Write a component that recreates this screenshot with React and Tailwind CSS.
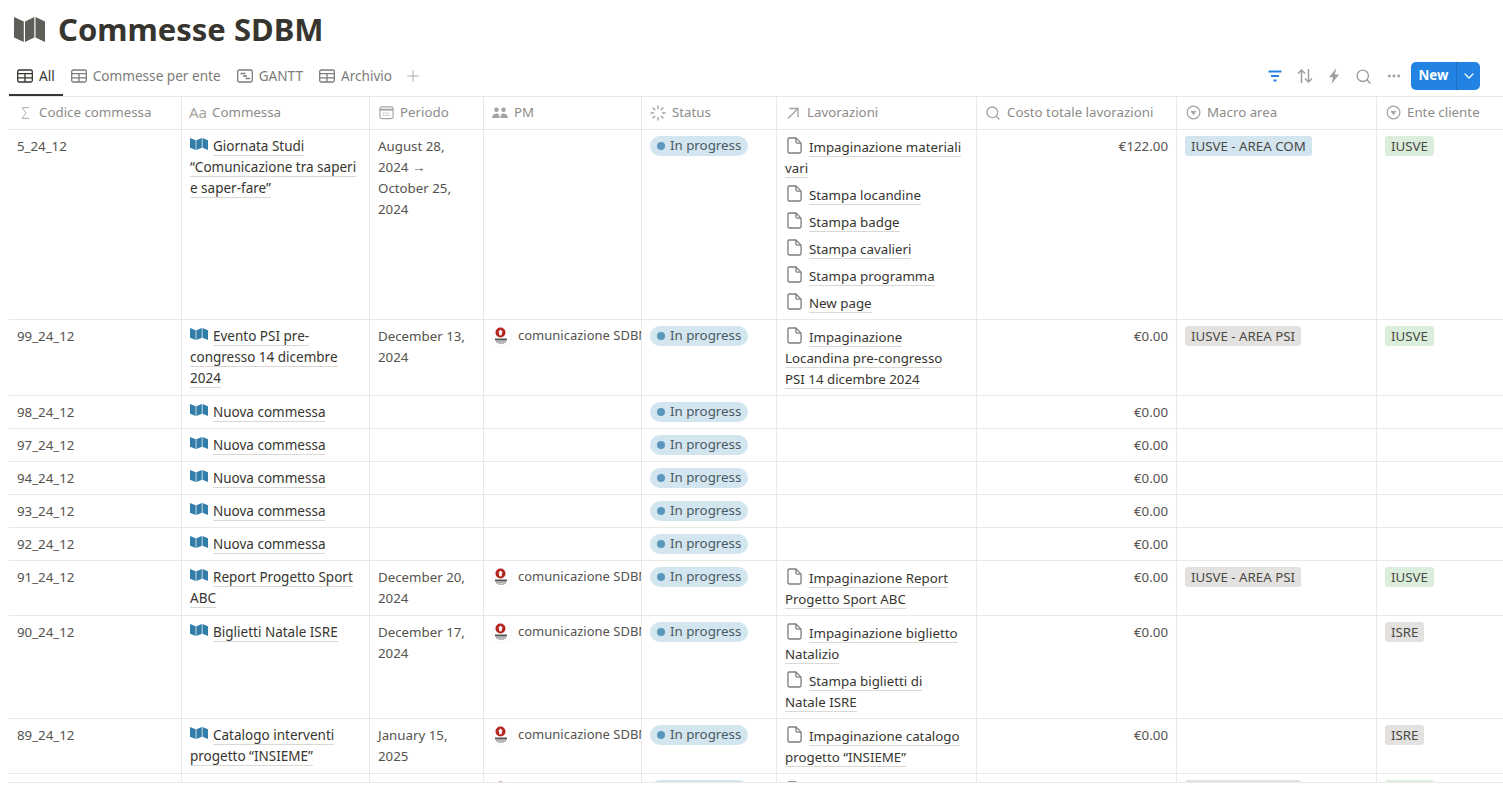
import { Plus, Search, MoreHorizontal, ChevronDown } from 'lucide-react';

const WIDTHS = ['w-[173px]', 'w-[188px]', 'w-[114px]', 'w-[158px]', 'w-[135px]', 'w-[200px]', 'w-[200px]', 'w-[200px]', 'w-[126px]'];

const COM = 'comunicazione SDBM';

const rows = [
  {
    h: 'h-[190px]', code: '5_24_12', name: ['Giornata Studi', '“Comunicazione tra saperi', 'e saper-fare”'],
    period: ['August 28,', '2024 →', 'October 25,', '2024'],
    jobs: [['Impaginazione materiali', 'vari'], ['Stampa locandine'], ['Stampa badge'], ['Stampa cavalieri'], ['Stampa programma'], ['New page']],
    cost: '€122.00', area: ['IUSVE - AREA COM', 'bg-[#d3e5ef]'], ente: ['IUSVE', 'bg-[#dbeddb]'],
  },
  {
    h: 'h-[76px]', code: '99_24_12', name: ['Evento PSI pre-', 'congresso 14 dicembre', '2024'],
    period: ['December 13,', '2024'], pm: true,
    jobs: [['Impaginazione', 'Locandina pre-congresso', 'PSI 14 dicembre 2024']],
    cost: '€0.00', area: ['IUSVE - AREA PSI', 'bg-[#e3e2e0]'], ente: ['IUSVE', 'bg-[#dbeddb]'],
  },
  { h: 'h-[33px]', code: '98_24_12', name: ['Nuova commessa'], cost: '€0.00' },
  { h: 'h-[33px]', code: '97_24_12', name: ['Nuova commessa'], cost: '€0.00' },
  { h: 'h-[33px]', code: '94_24_12', name: ['Nuova commessa'], cost: '€0.00' },
  { h: 'h-[33px]', code: '93_24_12', name: ['Nuova commessa'], cost: '€0.00' },
  { h: 'h-[33px]', code: '92_24_12', name: ['Nuova commessa'], cost: '€0.00' },
  {
    h: 'h-[55px]', code: '91_24_12', name: ['Report Progetto Sport', 'ABC'],
    period: ['December 20,', '2024'], pm: true,
    jobs: [['Impaginazione Report', 'Progetto Sport ABC']],
    cost: '€0.00', area: ['IUSVE - AREA PSI', 'bg-[#e3e2e0]'], ente: ['IUSVE', 'bg-[#dbeddb]'],
  },
  {
    h: 'h-[103px]', code: '90_24_12', name: ['Biglietti Natale ISRE'],
    period: ['December 17,', '2024'], pm: true,
    jobs: [['Impaginazione biglietto', 'Natalizio'], ['Stampa biglietti di', 'Natale ISRE']],
    cost: '€0.00', ente: ['ISRE', 'bg-[#e3e2e0]'],
  },
  {
    h: 'h-[55px]', code: '89_24_12', name: ['Catalogo interventi', 'progetto “INSIEME”'],
    period: ['January 15,', '2025'], pm: true,
    jobs: [['Impaginazione catalogo', 'progetto “INSIEME”']],
    cost: '€0.00', ente: ['ISRE', 'bg-[#e3e2e0]'],
  },
  {
    h: 'h-[33px]', code: '88_24_12', name: ['Nuova commessa'],
    period: ['January 15,'], pm: true,
    jobs: [['Stampa']],
    cost: '€0.00', area: ['IUSVE - AREA PSI', 'bg-[#e3e2e0]'], ente: ['IUSVE', 'bg-[#dbeddb]'],
  },
];

function MapIcon({ className }) {
  return (
    <svg viewBox="0 0 31 25" className={className} fill="currentColor" preserveAspectRatio="none">
      <path d="M0 0 9.800 4.500V25L0 20.500z" />
      <path d="M11 4.500 20.300 0V20.500L11 25z" />
      <path d="M21.500 0 31 4.500V25L21.500 20.500z" />
    </svg>
  );
}

function PageIcon() {
  return (
    <svg viewBox="0 0 16 18" className="inline-block w-[15px] h-[17px] mr-[7px] ml-[2px] align-[-2px] text-[#7f7e7a]" fill="none" stroke="currentColor" strokeWidth="1.400">
      <path d="M2.500 1h7L15 6.500V15.500a1.500 1.500 0 0 1-1.500 1.500h-11A1.500 1.500 0 0 1 1 15.500V2.500A1.500 1.500 0 0 1 2.500 1z" />
      <path d="M9.500 1v4a1.500 1.500 0 0 0 1.500 1.500H15" />
    </svg>
  );
}

function TableIcon({ className }) {
  return (
    <svg viewBox="0 0 16 14" className={className} fill="none" stroke="currentColor" strokeWidth="1.300">
      <rect x="0.700" y="1" width="14.600" height="12" rx="1.500" />
      <path d="M0.700 4.700h14.600M0.700 8.900h14.600M8 4.700V13" />
    </svg>
  );
}

function Avatar() {
  return (
    <svg viewBox="0 0 20 20" className="w-5 h-5 mt-[2px] shrink-0">
      <circle cx="10" cy="10" r="9.700" fill="#fff" stroke="#efefee" strokeWidth="0.600" />
      <circle cx="8.500" cy="5.500" r="5" fill="#b3261e" />
      <path d="M8.500 2.500 6 5.300h1.200V8.200h2.600V5.300H11z" fill="#fff" />
      <rect x="3" y="11.500" width="12" height="2" fill="#555" />
      <rect x="4" y="14.300" width="10" height="1.200" fill="#888" />
      <rect x="6" y="16" width="6" height="1" fill="#bbb" />
    </svg>
  );
}

function HeaderIcon({ children }) {
  return <span className="w-4 h-4 mr-[6px] flex items-center justify-center text-[#a5a4a0] shrink-0">{children}</span>;
}

function SelectIcon() {
  return (
    <svg viewBox="0 0 16 16" className="w-[15px] h-[15px]" fill="none" stroke="currentColor" strokeWidth="1.300">
      <circle cx="8" cy="8" r="6.800" />
      <path d="M4.800 6.300h6.400L8 10.800z" fill="currentColor" stroke="none" />
    </svg>
  );
}

function GanttIcon({ className }) {
  return (
    <svg viewBox="0 0 16 14" className={className} fill="none" stroke="currentColor" strokeWidth="1.300">
      <rect x="0.700" y="1" width="14.600" height="12" rx="1.500" />
      <path d="M3.500 4.500h5M6 7h4M8.500 9.500h4.500" />
    </svg>
  );
}

function HeaderCell({ width, icon, label }) {
  return (
    <div className={`${width} shrink-0 flex items-center pl-2 pb-[1px] border-r border-[#e9e9e7] last:border-r-0 whitespace-nowrap overflow-hidden`}>
      <HeaderIcon>{icon}</HeaderIcon>
      <span>{label}</span>
    </div>
  );
}

function Tab({ icon, label, active }) {
  return (
    <div className={`flex items-center gap-[6px] h-[36px] px-2 pb-[2px] border-b-2 text-[13.6px] ${active ? 'text-[#37352f] border-[#37352f]' : 'text-[#7d7c78] border-transparent'}`}>
      {icon}
      <span>{label}</span>
    </div>
  );
}

function Tag({ tag }) {
  return <span className={`block w-fit h-5 leading-5 px-[6px] rounded-[3px] text-[#4a4945] ${tag[1]}`}>{tag[0]}</span>;
}

function Row({ row }) {
  return (
    <div className={`flex ${row.h} border-b border-[#e9e9e7] overflow-hidden text-[#37352f]`}>
      <div className={`${WIDTHS[0]} shrink-0 pl-2 pt-[6px] border-r border-[#e9e9e7] leading-[21px] text-[#55534e]`}>{row.code}</div>
      <div className={`${WIDTHS[1]} shrink-0 pl-2 pt-[6px] border-r border-[#e9e9e7] leading-[21px] text-[13.5px]`}>
        {row.name.map((line, i) => (
          <div key={i}>
            {i === 0 && <MapIcon className="inline-block w-[18px] h-[12px] mr-[5px] align-[1px] text-[#337ea9]" />}
            <span className="border-b border-[#d9d8d5]">{line}</span>
          </div>
        ))}
      </div>
      <div className={`${WIDTHS[2]} shrink-0 pl-2 pt-[6px] border-r border-[#e9e9e7] leading-[21px] text-[#55534e]`}>
        {(row.period || []).map((line) => <div key={line}>{line}</div>)}
      </div>
      <div className={`${WIDTHS[3]} shrink-0 pl-2 pt-[5px] border-r border-[#e9e9e7] overflow-hidden`}>
        {row.pm && (
          <div className="flex items-start gap-[6px] leading-[20px] text-[13px] text-[#55534e] whitespace-nowrap">
            <Avatar />
            <span>{COM}</span>
          </div>
        )}
      </div>
      <div className={`${WIDTHS[4]} shrink-0 pl-2 pt-[6px] border-r border-[#e9e9e7]`}>
        <span className="flex w-fit items-center h-5 pl-[7px] pr-[7px] gap-[5px] rounded-full bg-[#d3e5ef] text-[#4a5a63]">
          <span className="w-2 h-2 rounded-full bg-[#5b97bd]" />
          In progress
        </span>
      </div>
      <div className={`${WIDTHS[5]} shrink-0 pl-2 pt-[7px] border-r border-[#e9e9e7] leading-[21px] flex flex-col gap-[6px]`}>
        {(row.jobs || []).map((job, j) => (
          <div key={j}>
            {job.map((line, i) => (
              <div key={i}>
                {i === 0 && <PageIcon />}
                <span className="border-b border-[#d9d8d5]">{line}</span>
              </div>
            ))}
          </div>
        ))}
      </div>
      <div className={`${WIDTHS[6]} shrink-0 pr-2 pt-[6px] border-r border-[#e9e9e7] leading-[21px] text-right text-[#55534e]`}>{row.cost}</div>
      <div className={`${WIDTHS[7]} shrink-0 pl-2 pt-[6px] border-r border-[#e9e9e7]`}>{row.area && <Tag tag={row.area} />}</div>
      <div className={`${WIDTHS[8]} shrink-0 pl-2 pt-[6px]`}>{row.ente && <Tag tag={row.ente} />}</div>
    </div>
  );
}

export default function App() {
  return (
    <div className="h-[803px] w-[1503px] overflow-hidden bg-white text-[13.3px] text-[#37352f] font-['Noto_Sans',sans-serif]">
      {/* Title */}
      <div className="flex items-center h-[60px] pl-[14px] gap-[13px]">
        <MapIcon className="w-[31px] h-[25px] text-[#5f5e59] mb-[2px]" />
        <h1 className="text-[31px] font-bold leading-none mb-[2px]">Commesse SDBM</h1>
      </div>

      {/* Tabs and toolbar */}
      <div className="flex items-start justify-between h-[36px] ml-[9px] pr-[23px]">
        <div className="flex items-center">
          <Tab active icon={<TableIcon className="w-4 h-[14px]" />} label="All" />
          <Tab icon={<TableIcon className="w-4 h-[14px]" />} label="Commesse per ente" />
          <Tab icon={<GanttIcon className="w-4 h-[14px]" />} label="GANTT" />
          <Tab icon={<TableIcon className="w-4 h-[14px]" />} label="Archivio" />
          <Plus className="w-[18px] h-[18px] ml-[4px] mb-[4px] text-[#a5a4a0]" strokeWidth={1.2} />
        </div>
        <div className="flex items-center mt-[2px] text-[#a09f9b]">
          <svg viewBox="0 0 14 12" className="w-[14px] h-3 mr-[15px] text-[#2383e2]" stroke="currentColor" fill="none" strokeWidth="1.900">
            <path d="M0.500 1.500h13M3 6h8M5.500 10.500h3" />
          </svg>
          <svg viewBox="0 0 16 14" className="w-4 h-[14px] mr-[15px]" stroke="currentColor" fill="none" strokeWidth="1.500">
            <path d="M4.500 14V1M1 4.500 4.500 1 8 4.500M11.500 0v13M8 9.500 11.500 13 15 9.500" />
          </svg>
          <svg viewBox="0 0 12 16" className="w-3 h-4 mr-[15px]" fill="currentColor">
            <path d="M8.500 0 1 9.200h4.200L3.500 16 11 6.500H6.800z" />
          </svg>
          <Search className="w-[17px] h-[17px] mr-[14px]" strokeWidth={2} />
          <MoreHorizontal className="w-4 h-4 mr-[9px]" strokeWidth={2.4} />
          <div className="flex h-7 w-[69px] rounded-[5px] bg-[#2383e2] text-white font-bold text-[13.3px]">
            <span className="flex items-center justify-center w-[46px] border-r border-[#1c6fc4]">New</span>
            <span className="flex items-center justify-center flex-1"><ChevronDown className="w-4 h-4" strokeWidth={1.8} /></span>
          </div>
        </div>
      </div>

      {/* Table */}
      <div className="ml-[9px] h-[687px] border-b border-[#e9e9e7] overflow-hidden">
        <div className="flex h-[34px] border-y border-[#e9e9e7] text-[#8d8c88] overflow-hidden">
          <HeaderCell width={WIDTHS[0]} label="Codice commessa" icon={
            <svg viewBox="0 0 10 14" className="w-[9px] h-[14px]" fill="none" stroke="currentColor" strokeWidth="1">
              <path d="M9 1H1.200L5.500 7 1.200 13H9" />
            </svg>
          } />
          <HeaderCell width={WIDTHS[1]} label="Commessa" icon={<span className="text-[15px] leading-none whitespace-nowrap">Aa</span>} />
          <HeaderCell width={WIDTHS[2]} label="Periodo" icon={
            <svg viewBox="0 0 16 16" className="w-[15px] h-[15px]" fill="none" stroke="currentColor" strokeWidth="1.200">
              <rect x="1" y="2" width="14" height="12.500" rx="2" />
              <path d="M1 5h14" strokeWidth="2" />
              <path d="M4 8.500h8M4 11h8" strokeDasharray="1 1" />
            </svg>
          } />
          <HeaderCell width={WIDTHS[3]} label="PM" icon={
            <svg viewBox="0 0 16 12" className="w-4 h-3" fill="currentColor">
              <circle cx="4.500" cy="2.800" r="2.300" />
              <circle cx="11.500" cy="2.800" r="2.300" />
              <path d="M0 11c0-3 2-4.500 4.500-4.500S7.500 8 7.500 11zM8.500 11c0-3 .5-4.500 3-4.500S16 8 16 11z" />
            </svg>
          } />
          <HeaderCell width={WIDTHS[4]} label="Status" icon={
            <svg viewBox="0 0 16 16" className="w-4 h-4" fill="none" stroke="currentColor" strokeWidth="1.400" strokeLinecap="round">
              <path d="M8 1v2.500M8 12.500V15M1 8h2.500M12.500 8H15M3 3l1.800 1.800M11.200 11.200 13 13M3 13l1.800-1.800M11.200 4.800 13 3" />
            </svg>
          } />
          <HeaderCell width={WIDTHS[5]} label="Lavorazioni" icon={
            <svg viewBox="0 0 14 14" className="w-[14px] h-[14px]" fill="none" stroke="currentColor" strokeWidth="1.300">
              <path d="M2 12.500 12 2.500M3.500 2.500H12V11" />
            </svg>
          } />
          <HeaderCell width={WIDTHS[6]} label="Costo totale lavorazioni" icon={<Search className="w-4 h-4" strokeWidth={2} />} />
          <HeaderCell width={WIDTHS[7]} label="Macro area" icon={<SelectIcon />} />
          <HeaderCell width={WIDTHS[8]} label="Ente cliente" icon={<SelectIcon />} />
        </div>
        {rows.map((row) => <Row key={row.code} row={row} />)}
      </div>
    </div>
  );
}
